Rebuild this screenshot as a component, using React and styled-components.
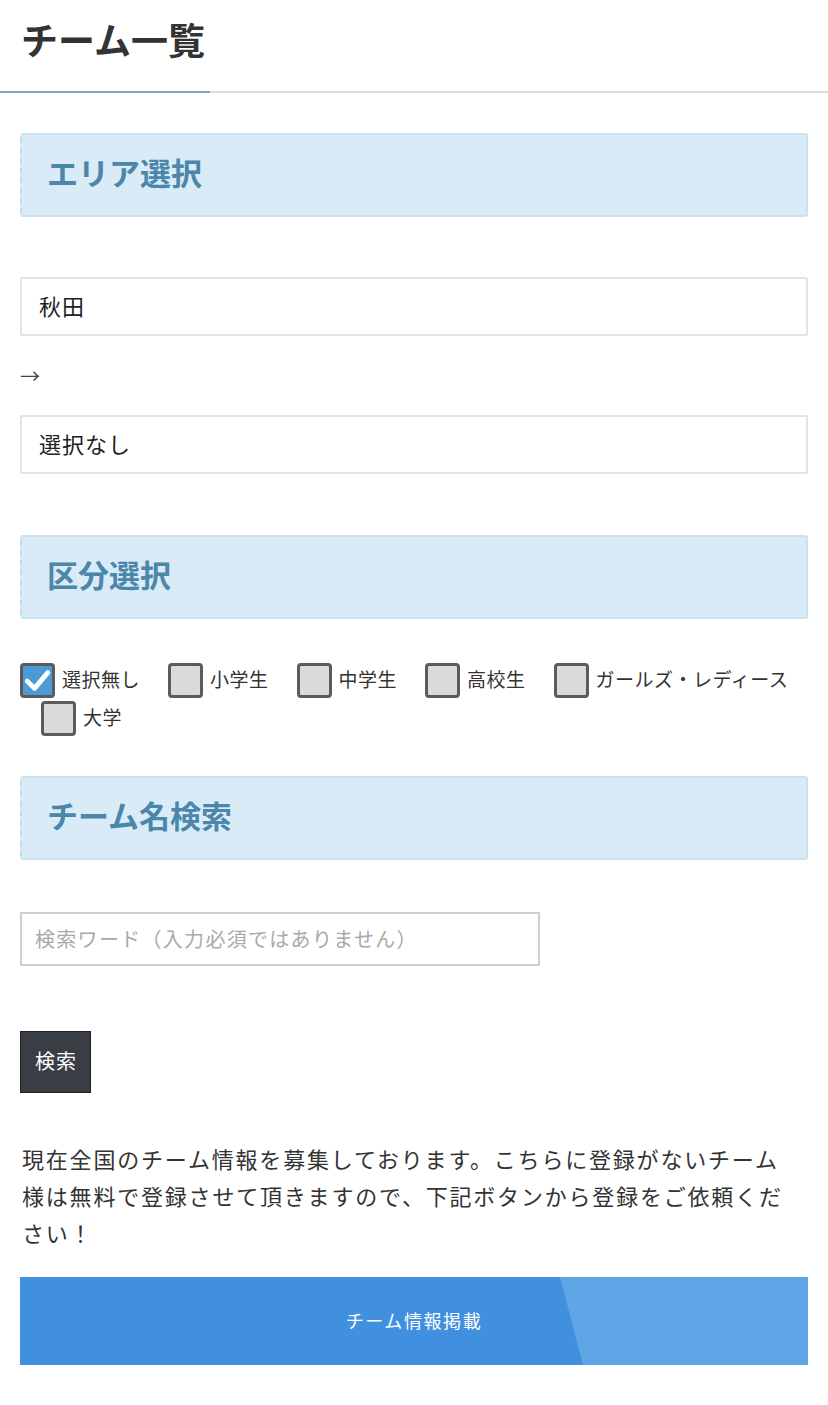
import React from "react";
import styled, { createGlobalStyle } from "styled-components";

const Global = createGlobalStyle`
  html, body { margin: 0; padding: 0; background: #fff; }
  body {
    font-family: "Noto Sans CJK JP", "Liberation Sans", sans-serif;
    color: #333;
  }
  * { box-sizing: border-box; }
`;

const Page = styled.div`
  width: 828px;
  padding-bottom: 40px;
`;

const TitleBar = styled.div`
  position: relative;
  border-bottom: 2px solid #dcdcdc;
  padding: 11px 21px 24px;
`;

const TitleAccent = styled.span`
  position: absolute;
  left: 0;
  bottom: -2px;
  width: 210px;
  height: 2px;
  background: #7fa8b5;
`;

const Title = styled.h1`
  margin: 0;
  font-size: 37px;
  font-weight: 700;
  line-height: 56px;
  color: #333;
`;

const Body = styled.div`
  padding: 40px 20px 0;
  display: flex;
  flex-direction: column;
`;

const SectionHead = styled.h2`
  margin: 0;
  height: 84px;
  display: flex;
  align-items: center;
  padding: 0 0 8px 25px;
  background: #d9ebf6;
  border: 2px solid #c8e3ee;
  border-left: 2px dashed #c2dee8;
  border-radius: 3px;
  font-size: 31px;
  font-weight: 700;
  color: #4b86ab;
  margin-bottom: ${(p) => p.$after}px;
`;

const SelectBox = styled.div`
  height: 59px;
  border: 2px solid #e3e3e3;
  border-radius: 2px;
  display: flex;
  align-items: center;
  padding: 0 0 3px 17px;
  font-size: 22px;
  letter-spacing: 1px;
  color: #222;
`;

const Arrow = styled.div`
  height: 79px;
  display: flex;
  align-items: center;
  font-size: 20px;
  color: #444;
`;

const Spacer = styled.div`
  height: ${(p) => p.$h}px;
`;

const CheckGroup = styled.div`
  margin-top: 42px;
  margin-bottom: 39px;
  margin-right: -28px;
  padding-left: 21px;
  text-indent: -21px;
  line-height: 0;
`;

const CheckItem = styled.label`
  display: inline-flex;
  align-items: center;
  text-indent: 0;
  height: 38px;
  margin-right: 28px;
  vertical-align: top;
`;

const Box = styled.span`
  width: 35px;
  height: 35px;
  border: 3px solid #5b5b5b;
  border-radius: 4px;
  background: ${(p) => (p.$checked ? "#4c9ad6" : "#dadada")};
  display: flex;
  align-items: center;
  justify-content: center;
`;

const CheckLabel = styled.span`
  margin-left: 7px;
  font-size: 19px;
  letter-spacing: 0.5px;
  line-height: 24px;
  padding-bottom: 2px;
  color: #333;
`;

const SearchInput = styled.div`
  margin-top: 52px;
  width: 520px;
  height: 54px;
  border: 2px solid #cfcfcf;
  display: flex;
  align-items: center;
  padding: 0 0 2px 13px;
  font-size: 20px;
  letter-spacing: 1.3px;
  color: #a9a9a9;
`;

const SearchButton = styled.button`
  margin-top: 65px;
  align-self: flex-start;
  width: 71px;
  height: 62px;
  background: #393e44;
  border: 1px solid #222;
  color: #fff;
  font-family: inherit;
  font-size: 20px;
  letter-spacing: 1px;
  padding: 0 0 3px 1px;
`;

const Paragraph = styled.p`
  margin: 47px 0 0;
  padding-left: 2px;
  width: 775px;
  font-size: 22px;
  letter-spacing: 1.8px;
  line-height: 37px;
  color: #333;
`;

const CtaButton = styled.div`
  position: relative;
  overflow: hidden;
  margin-top: 26px;
  height: 88px;
  background: #418fdf;
  display: flex;
  align-items: center;
  justify-content: center;
  padding-bottom: 3px;
  color: #fff;
  font-size: 18px;
  letter-spacing: 1.6px;
`;

const CtaShade = styled.span`
  position: absolute;
  top: 0;
  right: 0;
  bottom: 0;
  width: 248px;
  background: #5fa6e6;
  clip-path: polygon(0 0, 100% 0, 100% 100%, 23px 100%);
`;

const CtaText = styled.span`
  position: relative;
`;

const Check = () => (
  <svg width="29" height="29" viewBox="0 0 24 24">
    <path
      d="M3.5 12.5 L9.5 18.5 L20.5 5.5"
      fill="none"
      stroke="#fff"
      strokeWidth="4"
      strokeLinecap="round"
      strokeLinejoin="round"
    />
  </svg>
);

const options = [
  { label: "選択無し", checked: true },
  { label: "小学生" },
  { label: "中学生" },
  { label: "高校生" },
  { label: "ガールズ・レディース" },
  { label: "大学" },
];

export default function App() {
  return (
    <Page>
      <Global />
      <TitleBar>
        <Title>チーム一覧</Title>
        <TitleAccent />
      </TitleBar>
      <Body>
        <SectionHead $after={60}>エリア選択</SectionHead>
        <SelectBox>秋田</SelectBox>
        <Arrow>→</Arrow>
        <SelectBox>選択なし</SelectBox>
        <Spacer $h={61} />
        <SectionHead $after={0}>区分選択</SectionHead>
        <CheckGroup>
          {options.map((o) => (
            <CheckItem key={o.label}>
              <Box $checked={o.checked}>{o.checked && <Check />}</Box>
              <CheckLabel>{o.label}</CheckLabel>
            </CheckItem>
          ))}
        </CheckGroup>
        <SectionHead $after={0}>チーム名検索</SectionHead>
        <SearchInput>検索ワード（入力必須ではありません）</SearchInput>
        <SearchButton>検索</SearchButton>
        <Paragraph>
          現在全国のチーム情報を募集しております。こちらに登録がないチーム様は無料で登録させて頂きますので、下記ボタンから登録をご依頼ください！
        </Paragraph>
        <CtaButton>
          <CtaShade />
          <CtaText>チーム情報掲載</CtaText>
        </CtaButton>
      </Body>
    </Page>
  );
}
